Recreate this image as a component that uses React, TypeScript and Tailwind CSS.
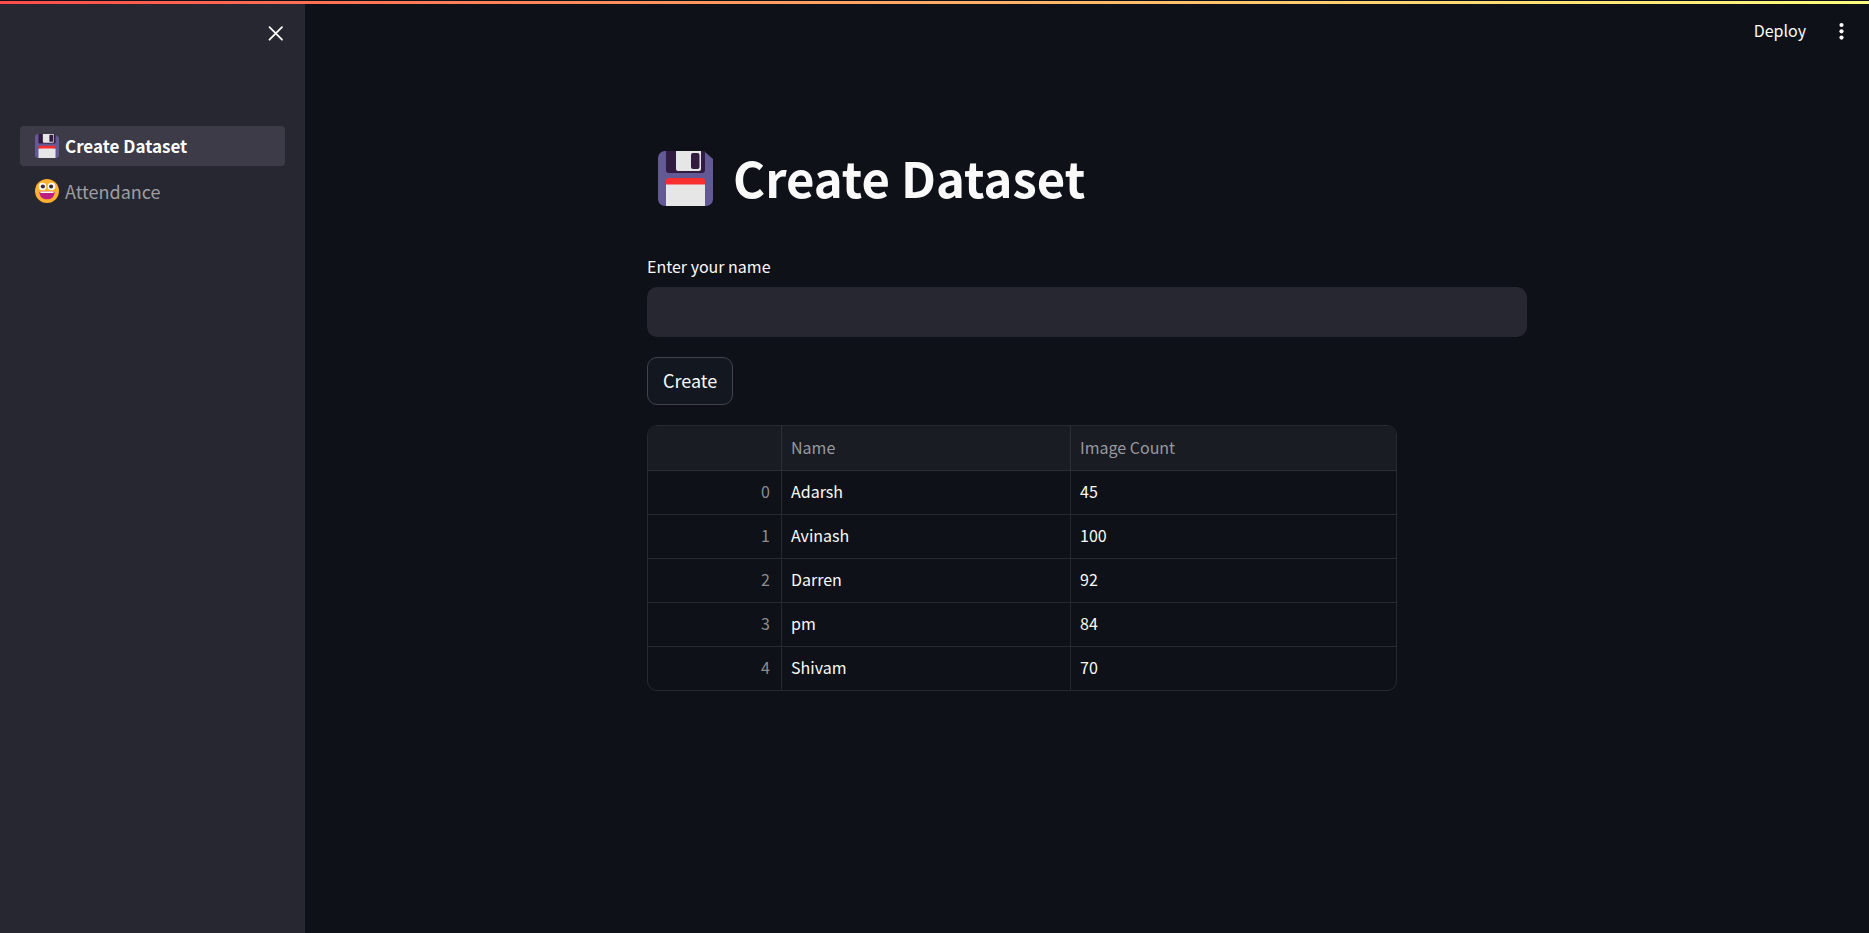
import { useState } from "react";
import type { ReactNode } from "react";

interface Row {
  name: string;
  count: number;
}

const rows: Row[] = [
  { name: "Adarsh", count: 45 },
  { name: "Avinash", count: 100 },
  { name: "Darren", count: 92 },
  { name: "pm", count: 84 },
  { name: "Shivam", count: 70 },
];

function FloppyIcon({ className }: { className: string }) {
  return (
    <svg viewBox="0 0 55 55" className={className} aria-hidden="true">
      <path d="M7 0H46L55 8V48A7 7 0 0 1 48 55H7A7 7 0 0 1 0 48V7A7 7 0 0 1 7 0Z" fill="#635994" />
      <path d="M8 0H47V19A3 3 0 0 1 44 22H11A3 3 0 0 1 8 19Z" fill="#321b41" />
      <path d="M18 0H43V18A2 2 0 0 1 41 20H20A2 2 0 0 1 18 18Z" fill="#e6e6e6" />
      <rect x="33" y="2" width="8.5" height="16" rx="2" fill="#321b41" />
      <path d="M8 33L27 31L47 33V55H8Z" fill="#e6e6e6" />
      <path d="M8 33.5V30A3 3 0 0 1 11 27H44A3 3 0 0 1 47 30V33.5Z" fill="#f92f2f" />
    </svg>
  );
}

function GrinIcon({ className }: { className: string }) {
  return (
    <svg viewBox="0 0 32 32" className={className} aria-hidden="true">
      <circle cx="16" cy="16" r="16" fill="#ffb02e" />
      <circle cx="10" cy="10" r="5" fill="#fff" />
      <circle cx="22" cy="10" r="5" fill="#fff" />
      <circle cx="10.5" cy="10" r="2.8" fill="#402a32" />
      <circle cx="21.5" cy="10" r="2.8" fill="#402a32" />
      <path d="M7 16.5H25A1 1 0 0 1 26 17.5C26 23.5 22 27 16 27S6 23.5 6 17.5A1 1 0 0 1 7 16.5Z" fill="#bb1d80" />
      <path d="M7 16.5H25V17.5A1 1 0 0 1 24 18.5H8A1 1 0 0 1 7 17.5Z" fill="#fff" />
    </svg>
  );
}

function NavItem({ icon, label, active }: { icon: ReactNode; label: string; active?: boolean }) {
  return (
    <a
      href="#"
      aria-current={active ? "page" : undefined}
      className={
        active
          ? "flex h-10 items-center gap-1.5 rounded bg-[#3c3b47] px-[15px] text-[17px] font-bold text-white"
          : "flex h-10 items-center gap-1.5 rounded px-[15px] text-lg text-[#9d9da3]"
      }
    >
      {icon}
      <span className="pb-px">{label}</span>
    </a>
  );
}

export default function App() {
  const [name, setName] = useState("");

  return (
    <div className="relative flex min-h-screen bg-[#0e1117] font-['Noto_Sans_CJK_SC','Open_Sans',sans-serif] text-[#fafafa]">
      <div className="absolute inset-x-0 top-0 h-1 border-t border-[#0e1117] bg-linear-to-r from-[#ff4b4b] to-[#fffd80]" />

      <aside className="w-[305px] shrink-0 bg-[#262730] px-5 pt-6">
        <div className="flex h-[102px] items-start justify-end">
          <button type="button" aria-label="Close sidebar">
            <svg viewBox="0 0 18 18" className="size-[18px]" aria-hidden="true">
              <path d="M2.500 3.200L15 15.700M15 3.200L2.500 15.700" stroke="#fafafa" strokeWidth="1.800" strokeLinecap="round" />
            </svg>
          </button>
        </div>
        <nav className="flex flex-col gap-[5px]">
          <NavItem active icon={<FloppyIcon className="size-6" />} label="Create Dataset" />
          <NavItem icon={<GrinIcon className="size-6" />} label="Attendance" />
        </nav>
      </aside>

      <div className="flex min-w-0 flex-1 flex-col">
        <header className="flex h-[62px] items-center justify-end gap-[30px] pr-[22px]">
          <button type="button" className="pb-0.5 text-base">Deploy</button>
          <button type="button" aria-label="Main menu">
            <svg viewBox="0 0 11 18" className="h-[18px] w-[11px]" aria-hidden="true" fill="#fafafa">
              <circle cx="5.500" cy="3" r="2.100" />
              <circle cx="5.500" cy="9.300" r="2.100" />
              <circle cx="5.500" cy="15.600" r="2.100" />
            </svg>
          </button>
        </header>

        <main className="mx-auto w-full max-w-[880px] pt-[76px]">
          <h1 className="flex h-20 items-center gap-5 pl-[11px] text-[49px] font-bold">
            <FloppyIcon className="size-[55px]" />
            <span className="pb-0.5">Create Dataset</span>
          </h1>

          <form className="mt-9 flex flex-col items-start" onSubmit={(event) => event.preventDefault()}>
            <label htmlFor="name" className="text-base leading-6">
              Enter your name
            </label>
            <input
              id="name"
              type="text"
              value={name}
              onChange={(event) => setName(event.target.value)}
              className="mt-[9px] h-[50px] w-full rounded-[10px] bg-[#262730] px-3 text-lg outline-none"
            />
            <button
              type="submit"
              className="mt-5 h-12 rounded-[10px] border border-[#41444c] bg-[#131720] px-[15px] pb-0.5 text-lg"
            >
              Create
            </button>
          </form>

          <div className="mt-5 w-full max-w-[750px] overflow-hidden rounded-[10px] border border-[#262930]">
            <table className="w-full table-fixed border-separate border-spacing-0 text-left text-base leading-6">
              <colgroup>
                <col className="w-[134px]" />
                <col className="w-[289px]" />
                <col />
              </colgroup>
              <thead>
                <tr className="h-[45px] bg-[#1a1c24] text-[#97999c]">
                  <th aria-label="Index" className="border-r border-b border-[#2c2f35]" />
                  <th className="border-r border-b border-[#2c2f35] px-[9px] pb-0.5 font-normal">Name</th>
                  <th className="border-b border-[#2c2f35] px-[9px] pb-0.5 font-normal">Image Count</th>
                </tr>
              </thead>
              <tbody className="[&>tr:last-child>*]:border-b-0 [&>tr>*]:pb-1">
                {rows.map((row, index) => (
                  <tr key={row.name} className="h-11 last:h-[43px]">
                    <th scope="row" className="border-r border-b border-[#262930] px-[11px] text-right font-normal text-[#8b8d91]">
                      {index}
                    </th>
                    <td className="border-r border-b border-[#262930] px-[9px]">{row.name}</td>
                    <td className="border-b border-[#262930] px-[9px]">{row.count}</td>
                  </tr>
                ))}
              </tbody>
            </table>
          </div>
        </main>
      </div>
    </div>
  );
}
